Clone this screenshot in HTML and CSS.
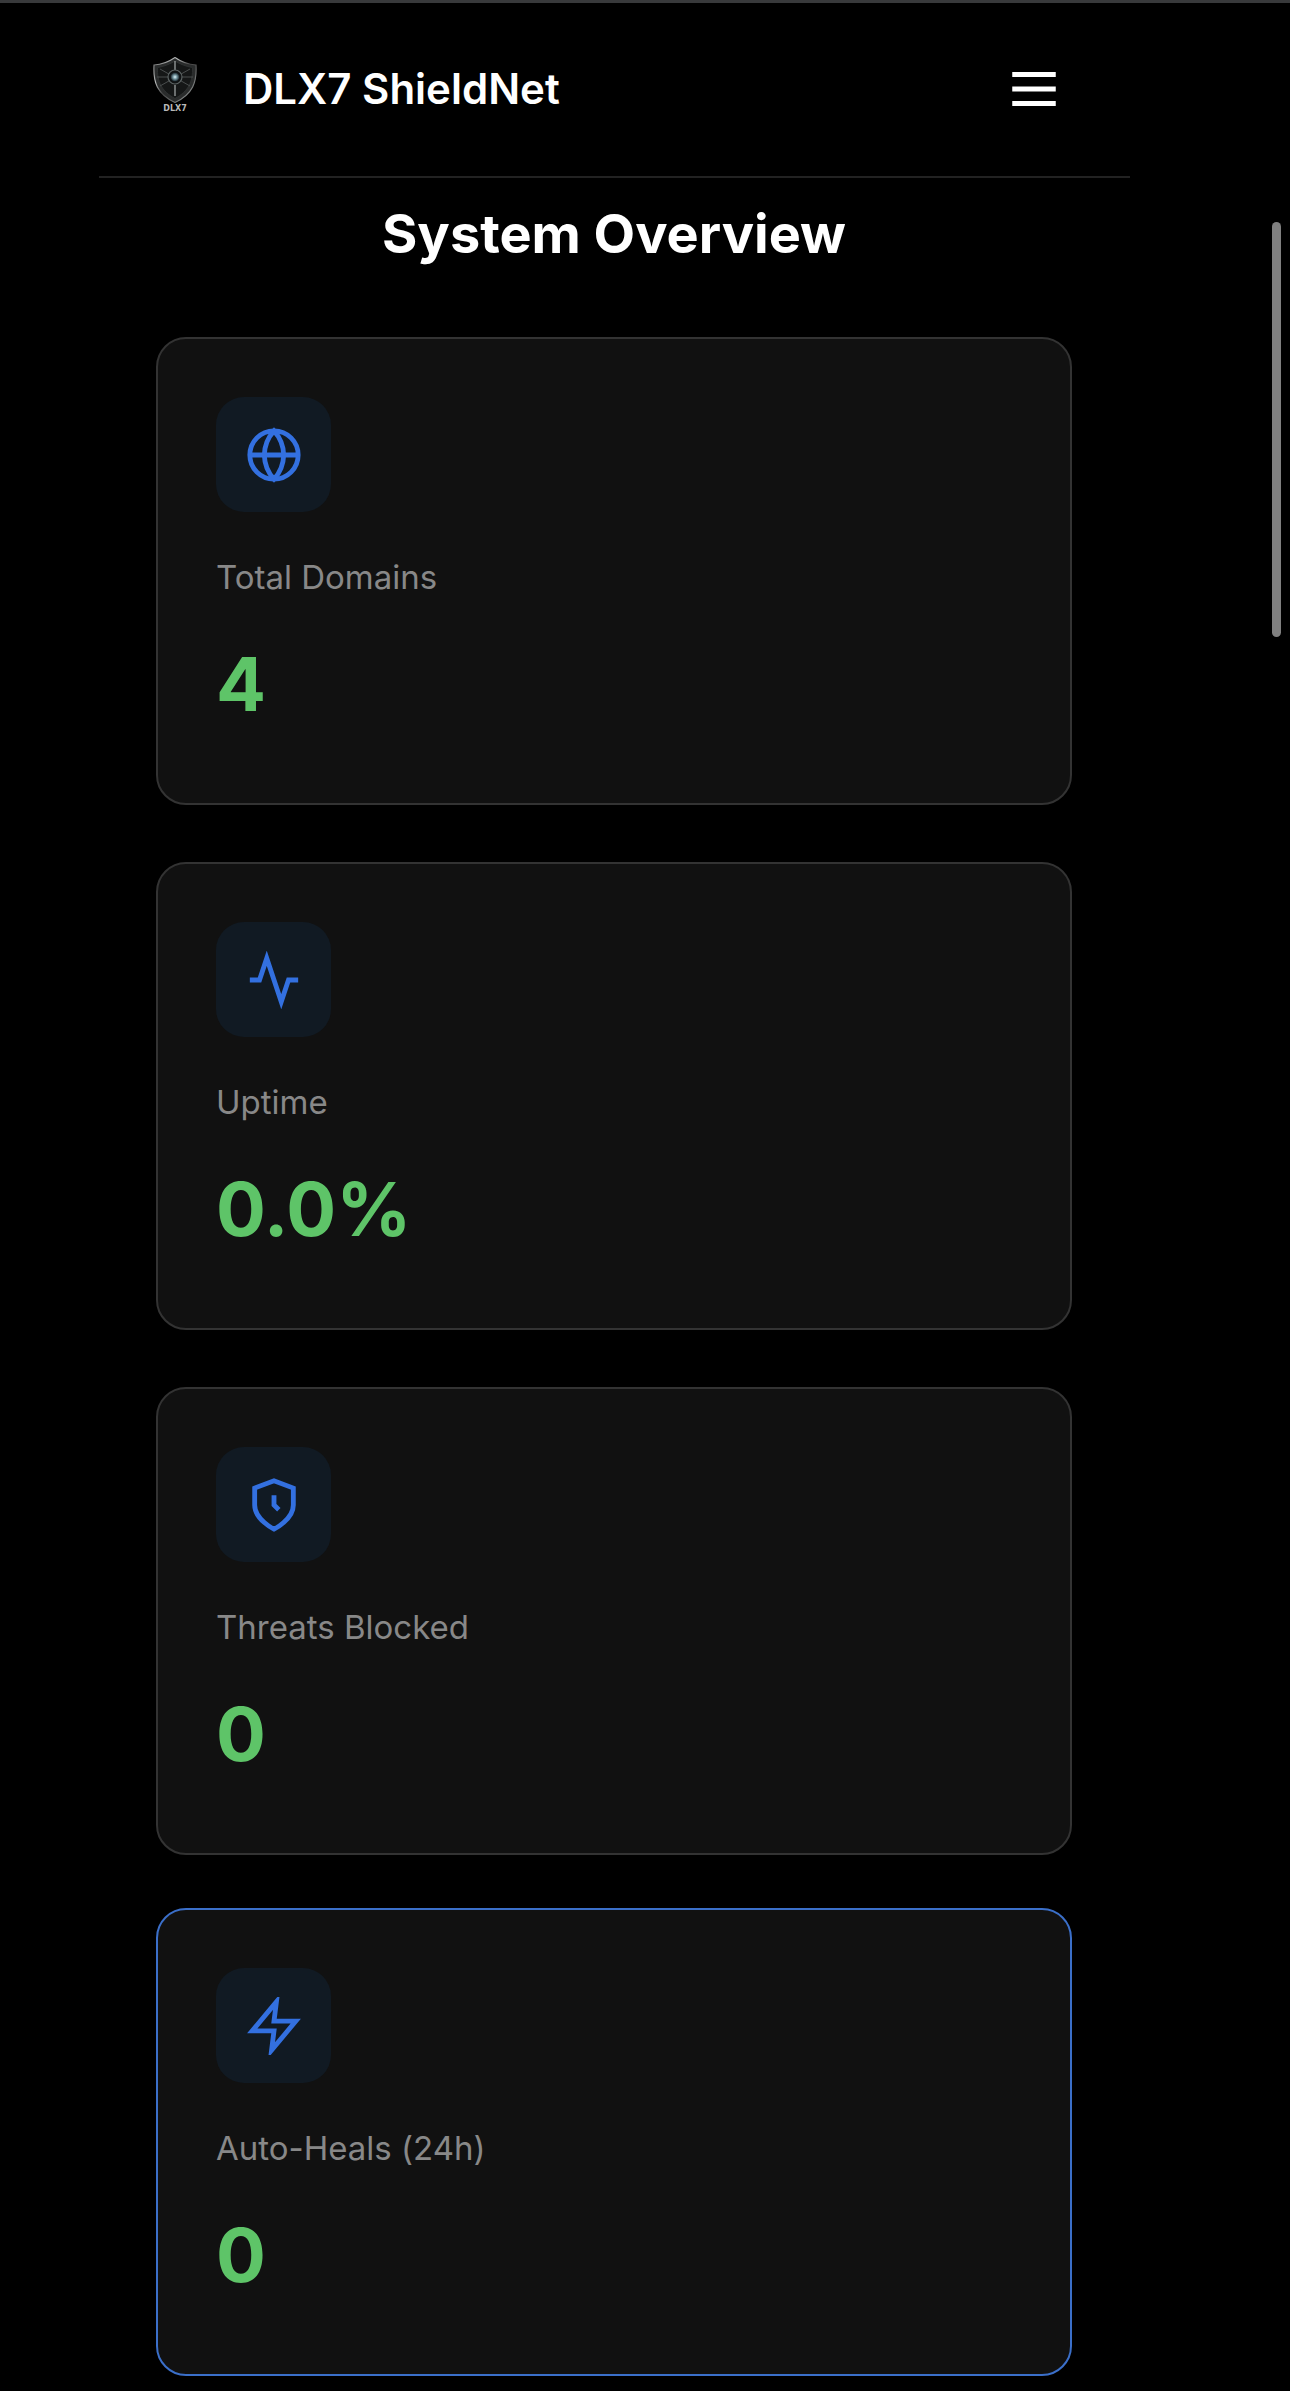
FILE: index.html
```
<!DOCTYPE html>
<html lang="en">
<head>
    <meta charset="UTF-8">
    <meta name="viewport" content="width=device-width, initial-scale=1.0">
    <title>DLX7 ShieldNet</title>
    <link rel="stylesheet" href="styles.css">
</head>
<body>

<div class="page">
    <header class="header">
        <div class="brand">
            <svg class="logo" viewBox="0 0 44 64" role="img" aria-label="DLX7">
                <defs>
                    <linearGradient id="steel" x1="0" y1="0" x2="1" y2="1">
                        <stop offset="0" stop-color="#666"/>
                        <stop offset="0.3" stop-color="#b5b8b8"/>
                        <stop offset="0.5" stop-color="#444"/>
                        <stop offset="0.8" stop-color="#7d8080"/>
                        <stop offset="1" stop-color="#333"/>
                    </linearGradient>
                    <radialGradient id="core">
                        <stop offset="0" stop-color="#e4f6fa"/>
                        <stop offset="0.4" stop-color="#7fa3ad"/>
                        <stop offset="1" stop-color="#152026"/>
                    </radialGradient>
                </defs>
                <path d="M22 0.500C17 4 9 7.500 1 8C0 25 4 37 22 45.500C40 37 44 25 43 8C35 7.500 27 4 22 0.500Z" fill="#2a2c2c" stroke="url(#steel)" stroke-width="1.200"/>
                <path d="M22 4C17 7 11 9.500 4.500 10.500C4 24 8 34 22 41.500C36 34 40 24 39.500 10.500C33 9.500 27 7 22 4Z" fill="#151717" stroke="#2e3131" stroke-width="1"/>
                <path d="M4 20H40M7 12L37 29M37 12L7 29" stroke="#4a4e4e" stroke-width="1"/>
                <path d="M22 4V13M22 28V39" stroke="#a6abab" stroke-width="1.200"/>
                <circle cx="22" cy="20" r="7" fill="#101314" stroke="#5c6363" stroke-width="1.200"/>
                <circle cx="22" cy="20" r="4.500" fill="url(#core)"/>
                <text x="22" y="54" text-anchor="middle" class="logo-text">DLX7</text>
            </svg>
            <h1>DLX7 ShieldNet</h1>
        </div>
        <button class="menu-btn" type="button" aria-label="Menu">
            <svg class="icon" viewBox="0 0 24 24">
                <path d="M3 6H21M3 12H21M3 18H21"/>
            </svg>
        </button>
    </header>

    <main class="overview">
        <h2>System Overview</h2>

        <div class="cards">
            <section class="card">
                <div class="card-icon">
                    <svg class="icon" viewBox="0 0 24 24">
                        <circle cx="12" cy="12" r="10"/>
                        <path d="M2 12H22"/>
                        <path d="M12 2C14.500 4.740 15.920 8.290 16 12C15.920 15.710 14.500 19.260 12 22C9.500 19.260 8.080 15.710 8 12C8.080 8.290 9.500 4.740 12 2Z"/>
                    </svg>
                </div>
                <div class="card-label">Total Domains</div>
                <div class="card-value">4</div>
            </section>

            <section class="card">
                <div class="card-icon">
                    <svg class="icon" viewBox="0 0 24 24">
                        <path d="M22 12H18L15 21L9 3L6 12H2"/>
                    </svg>
                </div>
                <div class="card-label">Uptime</div>
                <div class="card-value">0.0%</div>
            </section>

            <section class="card">
                <div class="card-icon">
                    <svg class="icon" viewBox="0 0 24 24">
                        <path d="M12 22S20 18 20 12V5L12 2L4 5V12C4 18 12 22 12 22Z"/>
                        <path d="M12 8V12L14 14"/>
                    </svg>
                </div>
                <div class="card-label">Threats Blocked</div>
                <div class="card-value">0</div>
            </section>

            <section class="card active">
                <div class="card-icon">
                    <svg class="icon" viewBox="0 0 24 24">
                        <path d="M13 2L3 14H12L11 22L21 10H12L13 2Z"/>
                    </svg>
                </div>
                <div class="card-label">Auto-Heals (24h)</div>
                <div class="card-value">0</div>
            </section>
        </div>
    </main>
</div>

<div class="scroll-thumb"></div>

</body>
</html>
```

FILE: styles.css
```
* {
    box-sizing: border-box;
}

body {
    margin: 0;
    background-color: #000000;
    border-top: 3px solid #38393b;
    color: #ffffff;
    font-family: Inter, "Liberation Sans", sans-serif;
}

.page {
    padding: 0 160px 0 99px;
}

/* header */
.header {
    display: flex;
    justify-content: space-between;
    align-items: center;
    height: 175px;
    padding: 0 57px 2px 54px;
    border-bottom: 2px solid #222222;
}

.brand {
    display: flex;
    align-items: center;
    gap: 46px;
}

.brand h1 {
    margin: 0;
    font-size: 42px;
    font-weight: 600;
    line-height: 64px;
}

.logo {
    width: 44px;
    height: 64px;
}

.logo-text {
    fill: #b8b8b8;
    font-family: "DejaVu Sans", sans-serif;
    font-size: 8px;
    font-weight: 700;
}

.menu-btn {
    display: flex;
    padding: 10px;
    background: none;
    border: none;
    color: #ffffff;
    cursor: pointer;
}

.icon {
    width: 58px;
    height: 58px;
    fill: none;
    stroke: currentColor;
    stroke-width: 2;
}

/* overview */
.overview {
    padding: 24px 58px 0 57px;
}

.overview h2 {
    margin: 0 0 71px;
    font-size: 54px;
    font-weight: 700;
    line-height: 64px;
    text-align: center;
}

.cards {
    display: grid;
    gap: 57px;
}

.card {
    padding: 58px;
    background-color: #111111;
    border: 2px solid #333333;
    border-radius: 30px;
}

/* lifted and outlined while the pointer is on it */
.card:hover,
.card.active {
    border-color: #3b6fc9;
    transform: translateY(-4px);
}

.card-icon {
    display: flex;
    align-items: center;
    justify-content: center;
    width: 115px;
    height: 115px;
    margin-bottom: 38px;
    background-color: #111a23;
    border-radius: 28px;
    color: #3370e0;
}

.card-label {
    margin-bottom: 19px;
    color: #888888;
    font-size: 33px;
    line-height: 54px;
}

.card-value {
    color: #5ec468;
    font-size: 74px;
    font-weight: 700;
    line-height: 122px;
}

.scroll-thumb {
    position: fixed;
    top: 222px;
    right: 9px;
    width: 9px;
    height: 415px;
    background-color: #808080;
    border-radius: 5px;
}
```
